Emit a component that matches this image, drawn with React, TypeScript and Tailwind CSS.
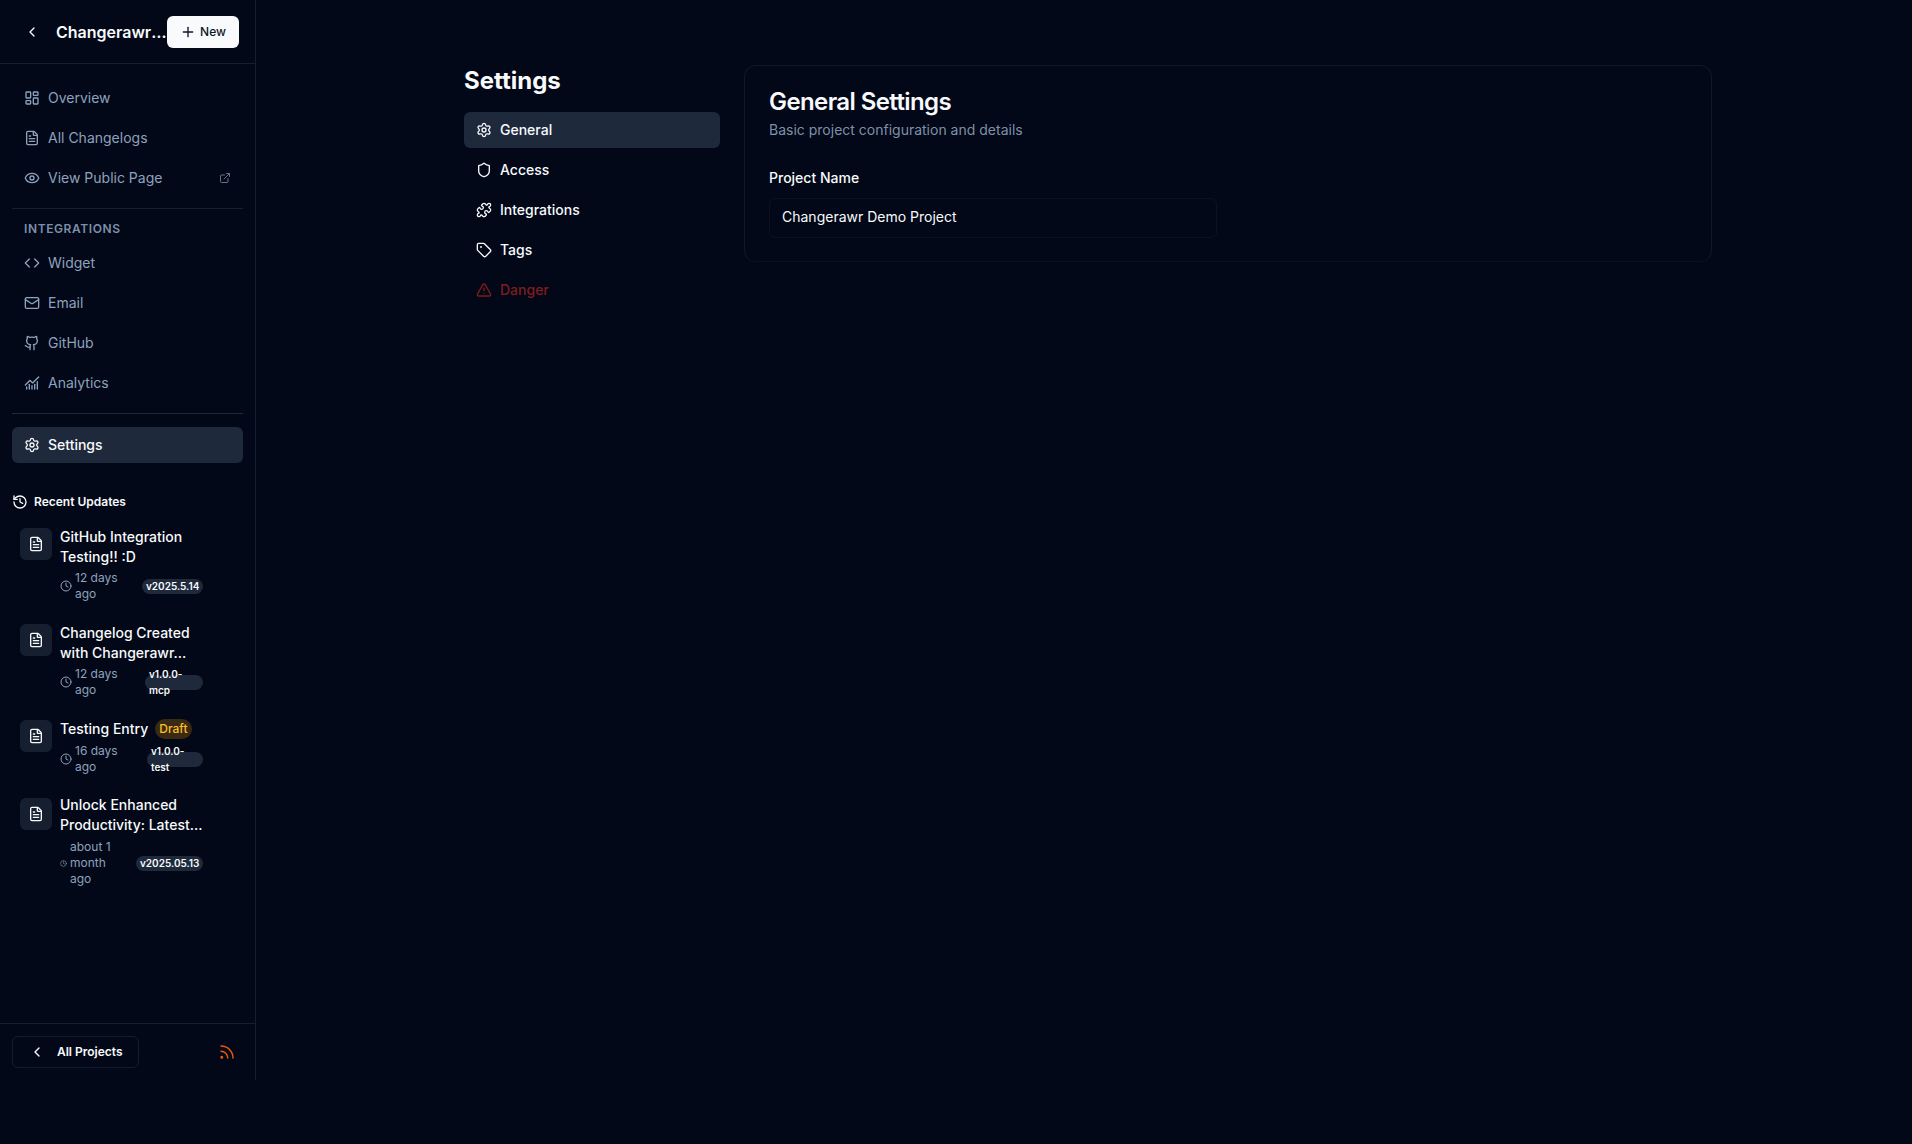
import {
  ChevronLeft, Plus, LayoutDashboard, FileText, Eye, ExternalLink, Code, Mail, Github,
  ChartNoAxesCombined, Settings, History, Clock, Shield, Puzzle, Tag, TriangleAlert, Rss,
} from "lucide-react";

function NavItem({ icon: Icon, label, trailing }: { icon: any; label: string; trailing?: boolean }) {
  return (
    <div className="flex h-9 items-center gap-2 rounded-md px-3 text-sm text-[#8ea2bd]">
      <Icon className="h-4 w-4 shrink-0" strokeWidth={2} />
      <span className="flex-1">{label}</span>
      {trailing && <ExternalLink className="h-3 w-3 opacity-70" />}
    </div>
  );
}

function Recent({
  title, time, version, draft, badgeW, clockW, last,
}: {
  title: string[]; time: string; version: string; draft?: boolean; badgeW: string; clockW: string; last?: boolean;
}) {
  return (
    <div className={"flex gap-2 pl-5 pr-[52px] " + (last ? "-mt-px" : "")}>
      <div className={"flex h-8 w-8 shrink-0 items-center justify-center rounded-md bg-[#1e293b]/70 " + (last ? "mt-[3px]" : "mt-px")}>
        <FileText className="h-4 w-4 text-[#f8fafc]" />
      </div>
      <div className="w-[143px] shrink-0">
        <div className="text-sm font-medium leading-5 text-[#f8fafc]">
          {draft ? (
            <div className="flex h-5 items-center gap-[7px] whitespace-nowrap">
              <span>{title[0]}</span>
              <span className="flex h-5 items-center rounded-full bg-[#3a2a13] px-1 text-xs font-medium text-[#fbbf24]">Draft</span>
            </div>
          ) : (
            title.map((t) => <div key={t} className="whitespace-nowrap">{t}</div>)
          )}
        </div>
        <div className={"flex items-center justify-between " + (draft || last ? "mt-1" : "mt-[3px]")}>
          <div className="flex min-w-0 items-center gap-[3px] text-xs leading-4 text-[#8ea2bd]">
            <Clock className={"shrink-0 " + clockW} />
            <span className="w-[44px]">{time}</span>
          </div>
          <div className={"flex h-[15px] shrink-0 items-center rounded-full bg-[#1e293b] px-1 text-[10px] font-semibold leading-4 text-[#f8fafc] " + badgeW}>
            <span>{version}</span>
          </div>
        </div>
      </div>
    </div>
  );
}

function SubNav({ icon: Icon, label, active, danger }: { icon: any; label: string; active?: boolean; danger?: boolean }) {
  return (
    <div
      className={
        "flex h-9 items-center gap-2 rounded-md px-3 text-sm font-medium " +
        (active ? "bg-[#1e293b] text-[#f8fafc]" : danger ? "text-[#7f1d1d]" : "text-[#f8fafc]")
      }
    >
      <Icon className="h-4 w-4 shrink-0" />
      <span>{label}</span>
    </div>
  );
}

export default function App() {
  return (
    <div className="flex min-h-[1144px] items-start bg-[#020817] font-['Inter','Liberation_Sans',sans-serif] text-[#f8fafc]">
      <aside className="flex h-[1080px] w-[256px] shrink-0 flex-col border-r border-[#1e293b]/70">
        <div className="flex h-16 shrink-0 items-center border-b border-[#1e293b]/70 pl-6 pr-4">
          <ChevronLeft className="h-4 w-4 shrink-0 text-[#f8fafc]" />
          <div className="ml-4 w-[111px] shrink-0 truncate text-base font-semibold leading-7">Changerawr Demo Project</div>
          <div className="flex h-8 w-[72px] shrink-0 items-center justify-center gap-1 rounded-md bg-[#f8fafc] text-xs font-medium text-[#0f172a]">
            <Plus className="h-4 w-4" />
            <span>New</span>
          </div>
        </div>

        <div className="flex flex-1 flex-col pt-4">
          <nav className="flex flex-col gap-1 px-3">
            <NavItem icon={LayoutDashboard} label="Overview" />
            <NavItem icon={FileText} label="All Changelogs" />
            <NavItem icon={Eye} label="View Public Page" trailing />
          </nav>
          <div className="mx-3 mt-3 h-px bg-[#1e293b]/70" />
          <div className="mt-3 px-6 text-xs font-semibold uppercase leading-4 tracking-wider text-[#8ea2bd]/90">Integrations</div>
          <nav className="mt-2 flex flex-col gap-1 px-3">
            <NavItem icon={Code} label="Widget" />
            <NavItem icon={Mail} label="Email" />
            <NavItem icon={Github} label="GitHub" />
            <NavItem icon={ChartNoAxesCombined} label="Analytics" />
          </nav>
          <div className="mx-3 mt-3 h-px bg-[#1e293b]" />
          <div className="mx-3 mt-[13px] flex h-9 items-center gap-2 rounded-md bg-[#1e293b] px-3 text-sm font-medium text-[#f8fafc]">
            <Settings className="h-4 w-4" />
            <span>Settings</span>
          </div>

          <div className="mt-[31px] flex items-center gap-1.5 pl-3 text-xs font-semibold leading-4 text-[#f8fafc]">
            <History className="h-4 w-4" />
            <span>Recent Updates</span>
          </div>
          <div className="mt-[17px] flex flex-col gap-[21px]">
            <Recent title={["GitHub Integration", "Testing!! :D"]} time="12 days ago" version="v2025.5.14" badgeW="w-[61px]" clockW="h-3 w-3" />
            <Recent title={["Changelog Created", "with Changerawr..."]} time="12 days ago" version="v1.0.0-mcp" badgeW="w-[58px]" clockW="h-3 w-3" />
            <Recent title={["Testing Entry"]} draft time="16 days ago" version="v1.0.0-test" badgeW="w-[56px]" clockW="h-3 w-3" />
            <Recent title={["Unlock Enhanced", "Productivity: Latest..."]} last time="about 1 month ago" version="v2025.05.13" badgeW="w-[67px]" clockW="h-[7px] w-[7px]" />
          </div>
        </div>

        <div className="flex h-[57px] shrink-0 items-center justify-between border-t border-[#1e293b]/70 pl-3 pr-[19px]">
          <div className="flex h-8 w-[127px] items-center rounded-md border border-[#1e293b]/60 pl-[16px] text-xs font-semibold text-[#f8fafc]">
            <ChevronLeft className="h-4 w-4" />
            <span className="ml-3">All Projects</span>
          </div>
          <Rss className="h-[18px] w-[18px] text-[#ea580c]" />
        </div>
      </aside>

      <main className="flex-1 pl-[208px] pr-[200px] pt-[65px]">
        <div className="flex gap-6">
          <div className="w-[256px] shrink-0">
            <h1 className="mb-[15px] text-2xl font-bold leading-8">Settings</h1>
            <div className="flex flex-col gap-1">
              <SubNav icon={Settings} label="General" active />
              <SubNav icon={Shield} label="Access" />
              <SubNav icon={Puzzle} label="Integrations" />
              <SubNav icon={Tag} label="Tags" />
              <SubNav icon={TriangleAlert} label="Danger" danger />
            </div>
          </div>
          <div className="h-[197px] flex-1 rounded-xl border border-[#1e293b]/50 border-b-[#1e293b]/30 px-6 pt-5">
            <h2 className="text-2xl font-semibold leading-8 tracking-tight">General Settings</h2>
            <p className="mt-[2px] text-sm leading-5 text-[#8ea2bd]/90">Basic project configuration and details</p>
            <div className="mt-7 text-sm font-medium leading-5">Project Name</div>
            <div className="mt-[10px] flex h-10 w-[448px] items-center rounded-md border border-[#1e293b]/30 px-3 pb-[2px] text-sm">
              Changerawr Demo Project
            </div>
          </div>
        </div>
      </main>
    </div>
  );
}
